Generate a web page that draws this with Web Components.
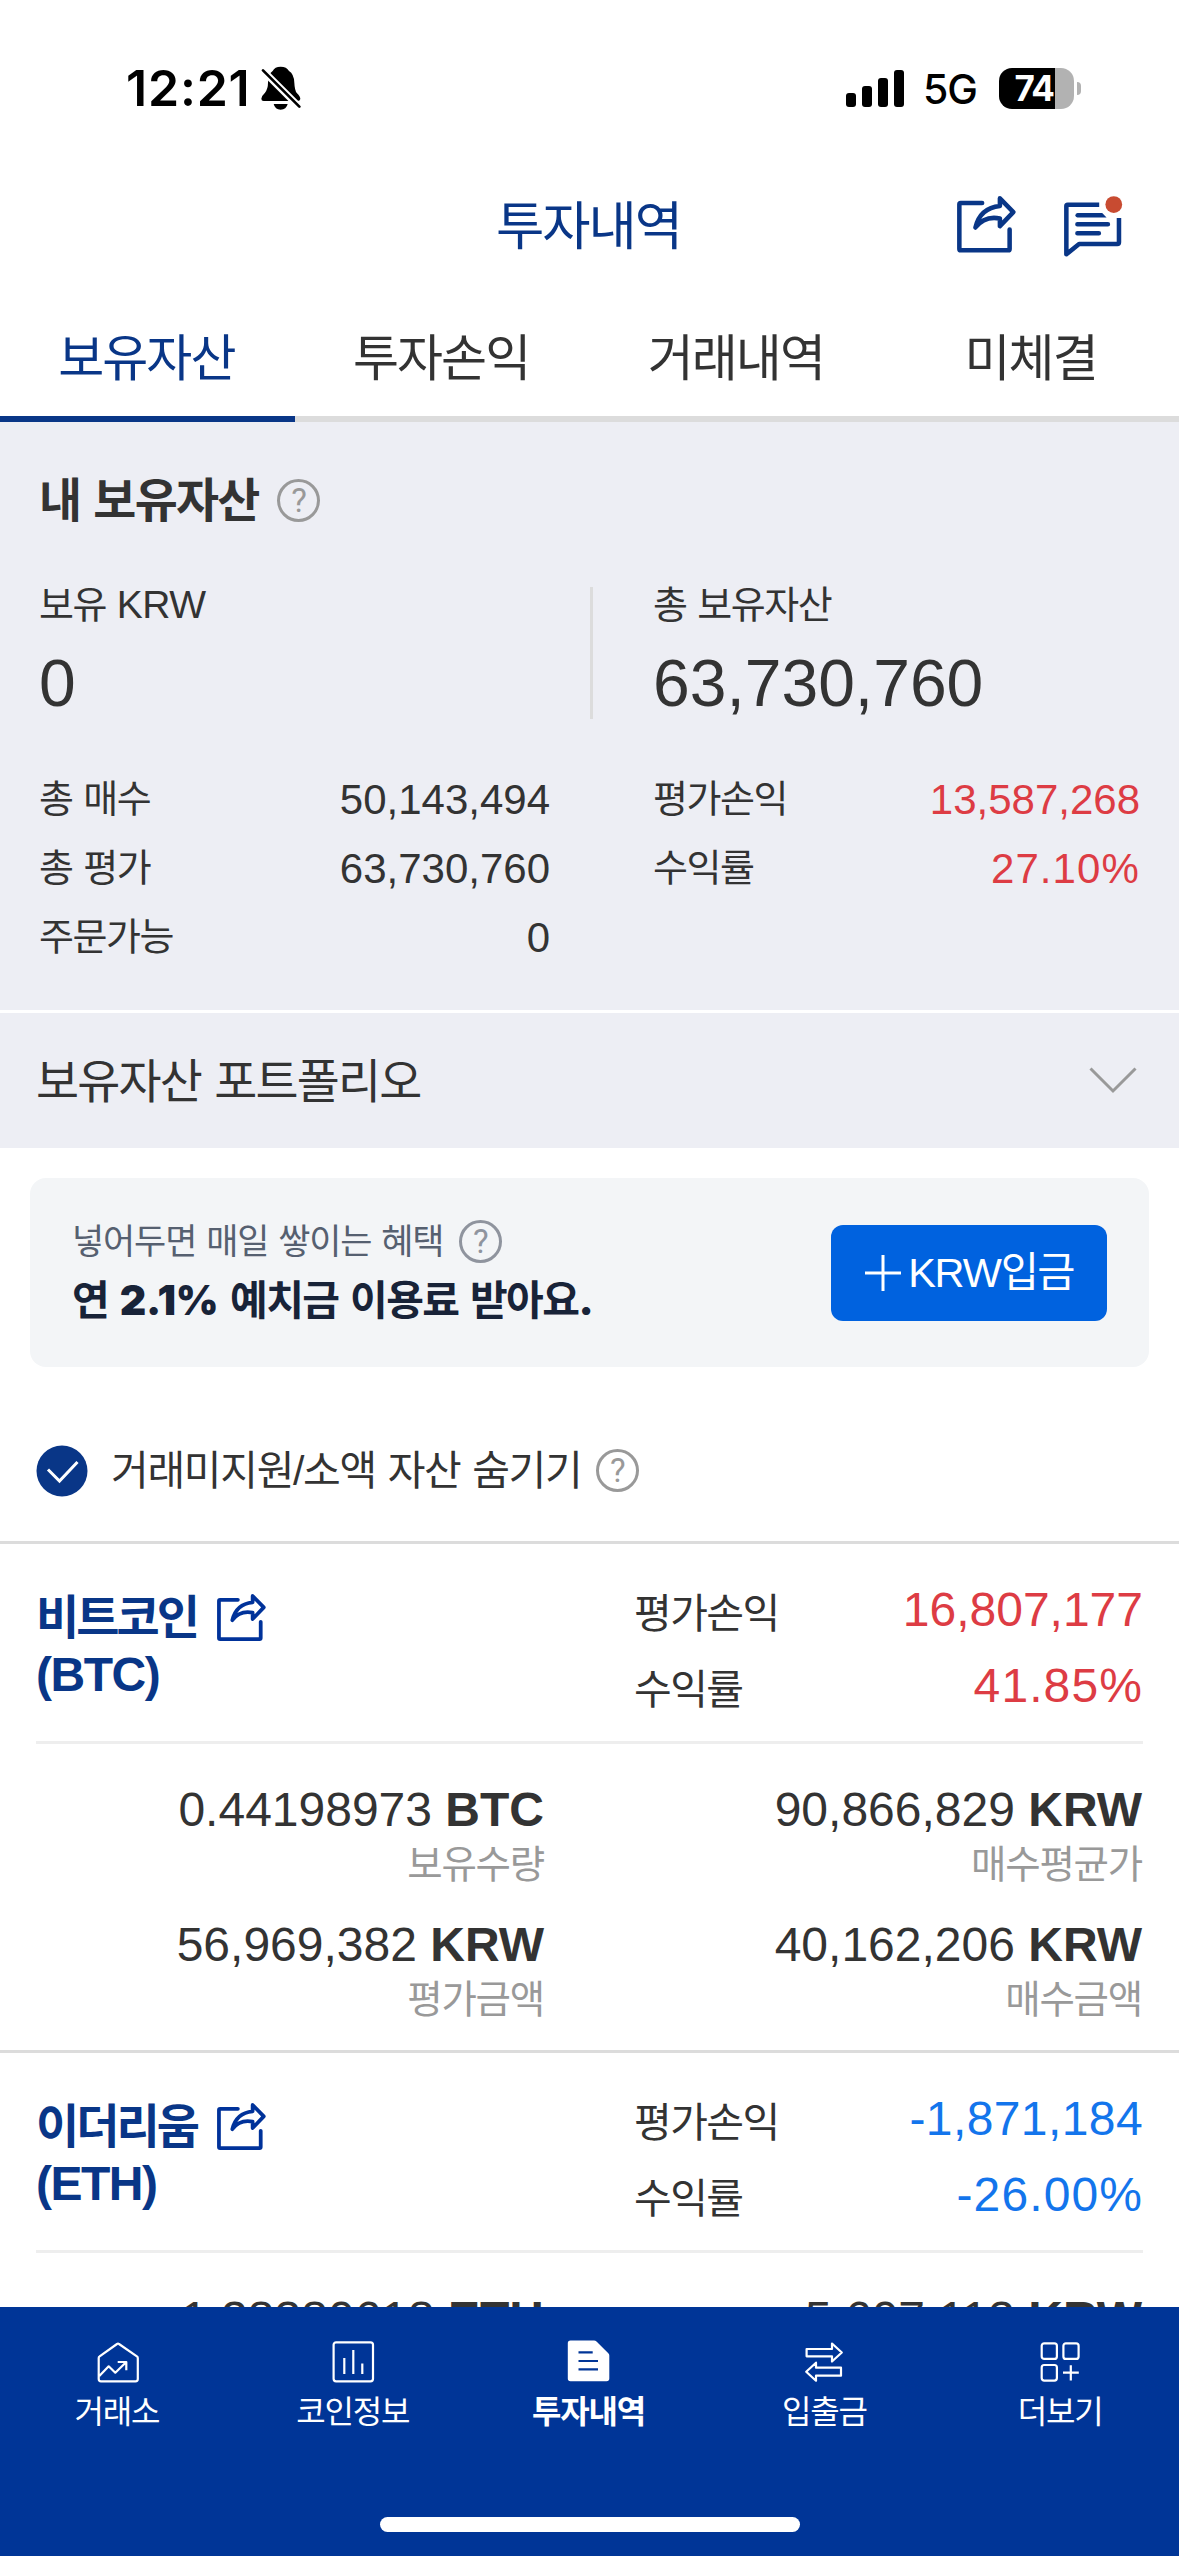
<!DOCTYPE html>
<html lang="ko">
<head>
<meta charset="utf-8">
<title>투자내역</title>
<style>
  html, body {
    margin: 0;
    height: 2556px;
    background: #fff;
  }
  body {
    font-family: "Liberation Sans", "Noto Sans CJK KR", sans-serif;
    color: #333;
    --navy: #093687;
    --red: #dd3c44;
    --blue: #1375ec;
    --line: #dcdcdc;
    --panel: #edeef4;
  }
</style>
</head>
<body>
<invest-app></invest-app>

<script>
// Hangul runs a bit tighter than the latin digits
const shared = `
  * { box-sizing: border-box; }
  svg { display: block; flex: none; }
  .ko { letter-spacing: -0.038em; word-spacing: 0.04em; white-space: nowrap; }
`;

function define(name, html) {
  const template = document.createElement("template");
  template.innerHTML = `<style>${shared}</style>${html}`;

  customElements.define(name, class extends HTMLElement {
    constructor() {
      super();
      this.attachShadow({ mode: "open" });
      this.shadowRoot.appendChild(template.content.cloneNode(true));
    }
  });
}

define("share-icon", `
  <style>
    :host { display: block; width: 59px; flex: none; color: var(--navy); }
    svg { width: 100%; }
  </style>
  <svg viewBox="174 80 176 170" fill="none" stroke="currentColor" stroke-width="13.5" stroke-linecap="round" stroke-linejoin="round">
    <path d="M249 101H185Q181 101 181 105V238Q181 242 185 242H327Q331 242 331 238V180"/>
    <path d="M302 87L342 128L302 170V147Q256 138 229 174Q243 116 302 110Z"/>
  </svg>
`);

define("help-icon", `
  <style>
    :host {
      display: flex;
      align-items: center;
      justify-content: center;
      flex: none;
      width: 43px;
      height: 43px;
      border: 3px solid currentColor;
      border-radius: 50%;
      box-sizing: border-box;
      color: #999;
      font: 33px/37px Roboto, sans-serif;
      letter-spacing: 0;
    }
  </style>
  <span>?</span>
`);

define("status-bar", `
  <style>
    :host {
      display: flex;
      align-items: center;
      height: 176px;
      padding: 0 98px 0 126px;
      box-sizing: border-box;
      font-family: Inter, sans-serif;
      color: #000;
    }
    .time { font-size: 50px; font-weight: 600; letter-spacing: 0.8px; line-height: 60px; width: 135px; white-space: nowrap; }
    .signal { margin-left: auto; }
    .net { font-size: 41px; font-weight: 500; line-height: 50px; margin: 1px 0 0 19px; width: 76px; letter-spacing: -1px; }
    .battery {
      width: 75px;
      height: 41px;
      padding-right: 5px;
      border-radius: 13px;
      background: linear-gradient(90deg, #000 56px, #b2b2b2 56px);
      color: #fff;
      font-size: 35px;
      font-weight: 700;
      line-height: 41px;
      text-align: center;
      letter-spacing: -1.5px;
    }
    .cap { width: 4px; height: 13px; margin-left: 3px; border-radius: 0 6px 6px 0; background: #b2b2b2; }
  </style>
  <span class="time">12:21</span>
  <svg width="40" height="44" viewBox="484 48 120 132">
    <path d="M543 50Q561 50 568 63Q583 72 584 98Q585 122 592 130Q602 140 602 147Q601 153 594 153H492Q485 153 485 146Q487 136 496 128Q505 116 505 98Q506 72 519 63Q525 50 543 50ZM522 162H564Q560 179 543 179Q526 179 522 162Z"/>
    <path d="M484 56L604 176" stroke="#fff" stroke-width="21"/>
    <path d="M490 61L599 170" stroke="#000" stroke-width="8" stroke-linecap="round"/>
  </svg>
  <svg class="signal" width="58" height="38" viewBox="0 0 58 38">
    <rect y="24" width="10" height="14" rx="3"/>
    <rect x="16" y="17" width="10" height="21" rx="3"/>
    <rect x="32" y="9" width="10" height="29" rx="3"/>
    <rect x="48" y="1" width="10" height="37" rx="3"/>
  </svg>
  <span class="net">5G</span>
  <span class="battery">74</span>
  <span class="cap"></span>
`);

define("app-header", `
  <style>
    :host {
      display: grid;
      grid-template-columns: 1fr auto 1fr;
      align-items: center;
      height: 98px;
      padding: 3px 56px 0;
      box-sizing: border-box;
      color: var(--navy);
    }
    h1 { grid-column: 2; margin: 0; padding-right: 2px; font-size: 52.5px; font-weight: 400; line-height: 60px; }
    .tools { display: flex; justify-content: flex-end; gap: 48px; }
  </style>
  <h1 class="ko"><slot></slot></h1>
  <div class="tools">
    <share-icon></share-icon>
    <svg width="59" height="61" viewBox="495 80 176 182" fill="none" stroke="currentColor" stroke-width="13.5" stroke-linejoin="round">
      <path d="M600 106H506Q502 106 502 110V254L540 223H654Q659 223 659 218V146"/>
      <path d="M535 164H626M535 191H599" stroke-linecap="round"/>
      <path d="M535 131H609L622 144H535Q529 143 529 137.500Q529 132 535 131Z" fill="currentColor" stroke="none"/>
      <circle cx="643.500" cy="105.500" r="25" fill="#c84b31" stroke="none"/>
    </svg>
  </div>
`);

define("tab-bar", `
  <style>
    :host { display: flex; height: 148px; }
  </style>
  <slot></slot>
`);

define("tab-item", `
  <style>
    :host {
      flex: 1;
      display: block;
      box-sizing: border-box;
      padding: 55px 2px 0 0;
      border-bottom: 6px solid var(--line);
      text-align: center;
      font-size: 50px;
      line-height: 60px;
    }
    :host([active]) { color: var(--navy); border-color: var(--navy); }
  </style>
  <span class="ko"><slot></slot></span>
`);

define("data-row", `
  <style>
    :host { display: flex; justify-content: space-between; height: 69px; line-height: 69px; }
    .ko { font-size: 38px; }
    .value { font-size: 42px; }
    :host([up]) .value { color: var(--red); }
    :host([down]) .value { color: var(--blue); letter-spacing: 0.4px; }
    :host([percent]) .value { letter-spacing: 1.1px; }
    :host([large]) { height: 76px; line-height: 76px; }
    :host([large]) .ko { font-size: 41px; padding-top: 4px; }
    :host([large]) .value { font-size: 48px; }
  </style>
  <span class="ko"><slot name="label"></slot></span>
  <span class="value"><slot></slot></span>
`);

define("asset-summary", `
  <style>
    :host {
      display: block;
      height: 588px;
      padding: 48px 39px 0;
      box-sizing: border-box;
      background: var(--panel);
    }
    .title { display: flex; align-items: center; gap: 19px; height: 60px; }
    h2 { margin: 0; padding-top: 1px; font-size: 46.8px; line-height: 60px; }
    .pair, .rows { display: grid; grid-template-columns: 554px 1fr; }
    .pair { margin-top: 57px; height: 132px; }
    .pair > div:first-child { border-right: 3px solid var(--line); }
    .pair > div + div, .rows > div + div { padding-left: 60px; }
    .label { font-size: 38px; line-height: 36px; }
    .label b { font-size: 39px; font-weight: 400; letter-spacing: -0.5px; }
    .total { font-size: 66px; line-height: 66px; margin-top: 27px; }
    .rows { margin-top: 46px; }
    .rows > div:first-child { padding-right: 43px; }
  </style>
  <div class="title"><h2 class="ko">내 보유자산</h2><help-icon></help-icon></div>
  <div class="pair">
    <div>
      <div class="label ko">보유 <b>KRW</b></div>
      <div class="total">0</div>
    </div>
    <div>
      <div class="label ko">총 보유자산</div>
      <div class="total">63,730,760</div>
    </div>
  </div>
  <div class="rows">
    <div>
      <data-row><span slot="label">총 매수</span>50,143,494</data-row>
      <data-row><span slot="label">총 평가</span>63,730,760</data-row>
      <data-row><span slot="label">주문가능</span>0</data-row>
    </div>
    <div>
      <data-row up><span slot="label">평가손익</span>13,587,268</data-row>
      <data-row up percent><span slot="label">수익률</span>27.10%</data-row>
    </div>
  </div>
`);

define("fold-row", `
  <style>
    :host {
      display: flex;
      align-items: center;
      justify-content: space-between;
      height: 138px;
      padding: 0 42px 0 36px;
      box-sizing: border-box;
      border-top: 3px solid #fff;
      background: var(--panel);
      font-size: 46.8px;
    }
    span { line-height: 60px; padding-top: 3px; }
  </style>
  <span class="ko"><slot></slot></span>
  <svg width="48" height="27" viewBox="0 0 48 27" fill="none" stroke="#999" stroke-width="3"><path d="M1.500 1.500L24 24L46.500 1.500"/></svg>
`);

define("deposit-banner", `
  <style>
    :host {
      display: flex;
      align-items: center;
      justify-content: space-between;
      height: 189px;
      margin: 30px 30px 0;
      padding: 0 42px;
      box-sizing: border-box;
      border-radius: 16px;
      background: #f3f5f7;
    }
    .text { padding-bottom: 5px; }
    .hint { display: flex; align-items: center; gap: 16px; font-size: 35px; line-height: 60px; color: #566070; }
    .hint .ko { letter-spacing: -0.033em; padding-top: 1px; }
    .hint help-icon { color: #8f949e; }
    .lead { font-size: 41px; font-weight: 700; line-height: 57px; color: #182338; }
    .lead b { font-family: Inter, sans-serif; letter-spacing: -0.1px; }
    .button {
      display: flex;
      align-items: center;
      justify-content: center;
      gap: 6px;
      width: 276px;
      height: 96px;
      border-radius: 12px;
      background: #0062df;
      color: #fff;
      font-size: 41.5px;
      line-height: 60px;
    }
    .button b { font-weight: 400; letter-spacing: -1.2px; }
  </style>
  <div class="text">
    <div class="hint"><span class="ko">넣어두면 매일 쌓이는 혜택</span><help-icon></help-icon></div>
    <div class="lead ko">연 <b>2.1%</b> 예치금 이용료 받아요<b>.</b></div>
  </div>
  <div class="button">
    <svg width="38" height="38" viewBox="0 0 38 38" stroke="#fff" stroke-width="3"><path d="M19 1V37M1 19H37"/></svg>
    <span class="ko"><b>KRW</b>입금</span>
  </div>
`);

define("hide-filter", `
  <style>
    :host {
      display: flex;
      align-items: center;
      height: 174px;
      padding: 33px 36px 0;
      box-sizing: border-box;
      font-size: 41px;
      line-height: 60px;
    }
    span.ko { margin: 0 15px 0 23px; letter-spacing: -0.032em; }
  </style>
  <svg width="52" height="52" viewBox="0 0 52 52">
    <circle cx="26" cy="26" r="25.500" fill="#093687"/>
    <path d="M12 24.500L23.500 36L41.500 17" fill="none" stroke="#fff" stroke-width="3"/>
  </svg>
  <span class="ko"><slot></slot></span>
  <help-icon></help-icon>
`);

define("coin-value", `
  <style>
    :host { display: block; text-align: right; height: 135px; }
    .amount { font-size: 48px; line-height: 56px; white-space: nowrap; }
    .ko { display: block; font-size: 38.5px; line-height: 53px; color: #999; letter-spacing: -0.032em; }
  </style>
  <div class="amount"><slot></slot> <b><slot name="unit"></slot></b></div>
  <span class="ko"><slot name="label"></slot></span>
`);

define("coin-card", `
  <style>
    :host { display: block; height: 509px; box-sizing: border-box; border-top: 3px solid var(--line); padding: 0 36px; }
    .head { display: grid; grid-template-columns: 598px 1fr; height: 200px; border-bottom: 3px solid #eee; }
    .name { padding-top: 45px; font-size: 47px; font-weight: 700; line-height: 58px; color: var(--navy); }
    .name div { display: flex; align-items: center; gap: 20px; height: 58px; letter-spacing: -0.064em; }
    .name share-icon { width: 49px; color: #00329a; }
    .code { display: block; margin-top: -1px; font-size: 48px; letter-spacing: -1.5px; }
    .profit { padding-top: 28px; }
    .body { display: grid; grid-template-columns: 508px 1fr; padding: 38px 1px 0 0; }
  </style>
  <div class="head">
    <div class="name">
      <div><slot name="name"></slot><share-icon></share-icon></div>
      <span class="code"><slot name="code"></slot></span>
    </div>
    <div class="profit"><slot name="profit"></slot></div>
  </div>
  <div class="body"><slot></slot></div>
`);

define("bottom-nav", `
  <style>
    :host { display: flex; flex-direction: column; flex: none; height: 249px; background: #003597; color: #fff; }
    .items { display: flex; padding-top: 33px; }
    .indicator { width: 420px; height: 15px; margin: auto auto 24px; border-radius: 8px; background: #fff; }
  </style>
  <div class="items"><slot></slot></div>
  <div class="indicator"></div>
`);

define("nav-item", `
  <style>
    :host { flex: 1; display: flex; flex-direction: column; align-items: center; gap: 8px; }
    .ko { font-size: 32px; line-height: 40px; padding-right: 2px; }
    :host([active]) .ko { font-weight: 700; }
  </style>
  <slot name="icon"></slot>
  <span class="ko"><slot></slot></span>
`);

define("invest-app", `
  <style>
    :host { display: flex; flex-direction: column; height: 2556px; overflow: hidden; }
    main { flex: 1; min-height: 0; overflow: hidden; }
    nav-item svg { width: 44px; height: 44px; fill: none; stroke: #fff; stroke-width: 2.2; stroke-linejoin: round; }
  </style>
  <status-bar></status-bar>
  <app-header>투자내역</app-header>
  <tab-bar>
    <tab-item active>보유자산</tab-item>
    <tab-item>투자손익</tab-item>
    <tab-item>거래내역</tab-item>
    <tab-item>미체결</tab-item>
  </tab-bar>
  <main>
    <asset-summary></asset-summary>
    <fold-row>보유자산 포트폴리오</fold-row>
    <deposit-banner></deposit-banner>
    <hide-filter>거래미지원/소액 자산 숨기기</hide-filter>
    <coin-card>
      <span slot="name">비트코인</span>
      <span slot="code">(BTC)</span>
      <data-row slot="profit" large up><span slot="label">평가손익</span>16,807,177</data-row>
      <data-row slot="profit" large up percent><span slot="label">수익률</span>41.85%</data-row>
      <coin-value>0.44198973<span slot="unit">BTC</span><span slot="label">보유수량</span></coin-value>
      <coin-value>90,866,829<span slot="unit">KRW</span><span slot="label">매수평균가</span></coin-value>
      <coin-value>56,969,382<span slot="unit">KRW</span><span slot="label">평가금액</span></coin-value>
      <coin-value>40,162,206<span slot="unit">KRW</span><span slot="label">매수금액</span></coin-value>
    </coin-card>
    <coin-card>
      <span slot="name">이더리움</span>
      <span slot="code">(ETH)</span>
      <data-row slot="profit" large down><span slot="label">평가손익</span>-1,871,184</data-row>
      <data-row slot="profit" large down percent><span slot="label">수익률</span>-26.00%</data-row>
      <coin-value>1.28380618<span slot="unit">ETH</span></coin-value>
      <coin-value>5,607,113<span slot="unit">KRW</span></coin-value>
    </coin-card>
  </main>
  <bottom-nav>
    <nav-item>
      <svg slot="icon" viewBox="0 0 44 44"><path d="M2.700 18Q2.700 17 3.600 16.400L21 4Q22 3 23 4L40.900 16.400Q41.800 17 41.800 18V39Q41.800 41.300 39.500 41.300H5Q2.700 41.300 2.700 39ZM3.300 36L12.700 26.300L19.300 32.700L30.300 22M21.700 22H30.300V30.300"/></svg>
      거래소
    </nav-item>
    <nav-item>
      <svg slot="icon" viewBox="0 0 44 44"><rect x="1.600" y="2.300" width="39.400" height="39" rx="2.500"/><path d="M12.300 18V34M21.300 10V34M30.300 23.500V34"/></svg>
      코인정보
    </nav-item>
    <nav-item active>
      <svg slot="icon" viewBox="0 0 44 44"><path d="M3.500 0.500H27Q28.500 0.500 29.500 1.500L41.300 13.300Q42.300 14.300 42.300 15.500V38.500Q42.300 41.300 39.500 41.300H3.500Q0.800 41.300 0.800 38.500V3.200Q0.800 0.500 3.500 0.500Z" fill="#fff" stroke="none"/><path d="M11.500 12.300H25.700M11.500 21H31M11.500 29.300H31" stroke="#003597"/></svg>
      투자내역
    </nav-item>
    <nav-item>
      <svg slot="icon" viewBox="0 0 44 44"><path d="M3.600 9H29V3.500L38.800 12.500L29 21.500V16.300H3.600ZM38 27.700H13V22.700L3.200 31.700L13 40.700V35.700H38Z"/></svg>
      입출금
    </nav-item>
    <nav-item>
      <svg slot="icon" viewBox="0 0 44 44"><rect x="2.700" y="3.300" width="15.200" height="15.600" rx="2.500"/><rect x="24.400" y="3.300" width="15.200" height="15.600" rx="2.500"/><rect x="2.700" y="25" width="15.200" height="15.600" rx="2.500"/><path d="M24 32.700H39.800M31.800 25.200V40.500"/></svg>
      더보기
    </nav-item>
  </bottom-nav>
`);
</script>
</body>
</html>
